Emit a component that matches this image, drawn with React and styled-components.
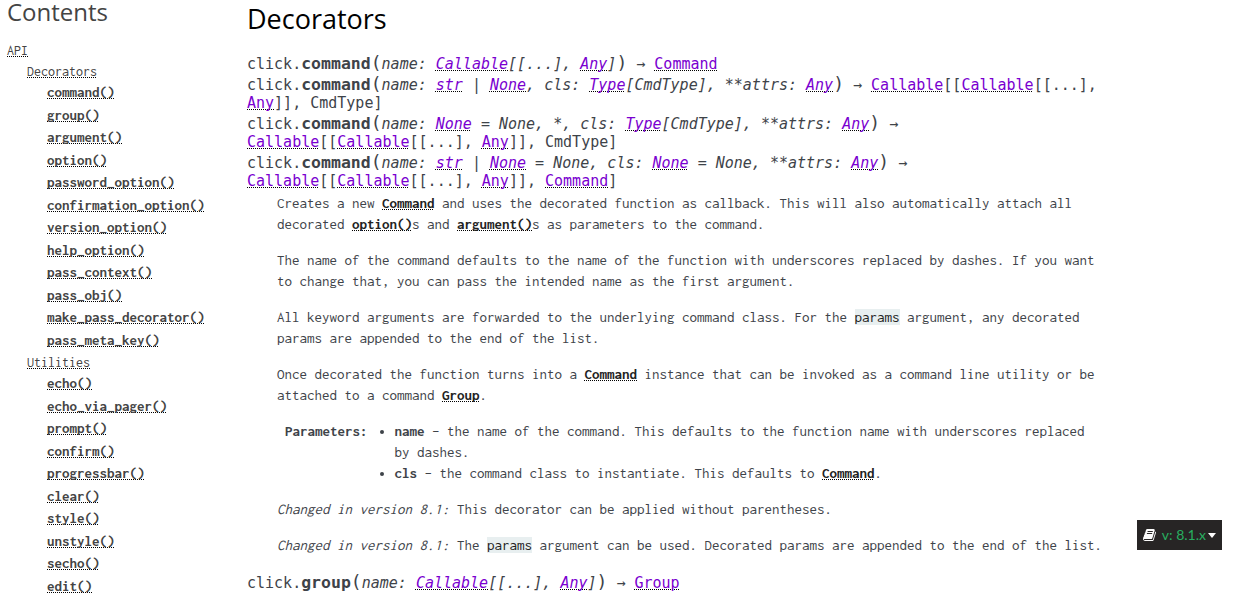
import React from "react";
import styled, { createGlobalStyle } from "styled-components";

const mono = `Inconsolata, "Noto Sans Mono CJK SC", "DejaVu Sans Mono", monospace`;
const sigMono = `"DejaVu Sans Mono", monospace`;

const Global = createGlobalStyle`
  body {
    margin: 0;
    background: #fff;
    color: #3e4349;
    font: 15px/21px ${mono};
  }
`;

const Page = styled.div`
  display: flex;
  align-items: flex-start;
  gap: 20px;
  padding: 0 132px 0 7px;
`;

const Sidebar = styled.nav`
  flex: 0 0 220px;
  font-size: 14px;
`;

const SideTitle = styled.h3`
  margin: 0 0 16px;
  color: #444;
  font: 400 24px/24px "Open Sans", sans-serif;
`;

const Toc = styled.ul`
  margin: 0;
  padding: 0 0 0 ${(p) => (p.$nested ? "20px" : "0")};
  list-style: none;
`;

const DottedLink = styled.a`
  text-decoration: underline dotted #000 1px;
  text-decoration-skip-ink: none;
  text-underline-offset: 1px;
`;

const TocLink = styled(DottedLink)`
  color: #444;
`;

const TocCode = styled.code`
  font: 700 15px/1 ${mono};
  vertical-align: 1px;
`;

const CodeItem = styled.li`
  line-height: 1.5;
  font-size: 15px;
`;

const Main = styled.main`
  flex: 1;
  min-width: 0;
`;

const Title = styled.h2`
  margin: 0 0 15px;
  color: #000;
  font: 400 27px/37px "Open Sans", sans-serif;
`;

const Definition = styled.dl`
  margin: 0 0 15px;
`;

const Signature = styled.dt`
  font: 15px ${sigMono};
`;

const SigName = styled.b`
  font-size: 110%;
`;

const Paren = styled.span`
  font-size: 18px;
`;

const TypeLink = styled(DottedLink)`
  color: #7a00d0;
`;

const Body = styled.dd`
  margin: 3px 0 0 30px;
`;

const Para = styled.p`
  margin: 0 0 15px;
`;

const RefLink = styled(DottedLink)`
  color: #222;
  font-weight: 700;
`;

const Literal = styled.code`
  background: #e8eff0;
  color: #222;
  font: 15px/15px ${mono};
`;

const Fields = styled.dl`
  display: flex;
  gap: 7px;
  margin: 0 0 15px;
  padding: 0 8px;
`;

const FieldName = styled.dt`
  font-weight: 700;
`;

const FieldBody = styled.dd`
  flex: 1;
  margin: 0;
`;

const ParamList = styled.ul`
  margin: 0;
  padding: 0 0 0 20px;
`;

const Version = styled.button`
  position: fixed;
  right: 20px;
  bottom: 43px;
  display: flex;
  align-items: center;
  height: 30px;
  padding: 0 6px;
  border: 0;
  background: #272525;
  color: #27ae60;
  font: 14px/30px Lato, sans-serif;
  cursor: pointer;
`;

const VersionText = styled.span`
  flex: 1;
  padding: 0 2px 0 6px;
`;

const decorators = [
  "command()", "group()", "argument()", "option()", "password_option()",
  "confirmation_option()", "version_option()", "help_option()",
  "pass_context()", "pass_obj()", "make_pass_decorator()", "pass_meta_key()",
];
const utilities = [
  "echo()", "echo_via_pager()", "prompt()", "confirm()", "progressbar()",
  "clear()", "style()", "unstyle()", "secho()", "edit()",
];

function TocGroup({ title, items }) {
  return (
    <li>
      <TocLink href="#">{title}</TocLink>
      <Toc $nested>
        {items.map((name) => (
          <CodeItem key={name}>
            <TocCode><TocLink href="#">{name}</TocLink></TocCode>
          </CodeItem>
        ))}
      </Toc>
    </li>
  );
}

const T = ({ children }) => <TypeLink href="#">{children}</TypeLink>;
const Ref = ({ children }) => <RefLink href="#">{children}</RefLink>;

function Sig({ name, params, returns }) {
  return (
    <Signature>
      click.<SigName>{name}</SigName><Paren>(</Paren><em>{params}</em><Paren>)</Paren> → {returns}
    </Signature>
  );
}

const nested = <><T>Callable</T>[[<T>Callable</T>[[...], <T>Any</T>]], </>;
const callableParam = <>name: <T>Callable</T>[[...], <T>Any</T>]</>;

function BookIcon() {
  return (
    <svg width="13" height="14" viewBox="0 0 1664 1792" fill="#fcfcfc" aria-hidden="true">
      <path d="M1639 478q40 57 18 129l-275 906q-19 64-76.5 107.500t-122.500 43.500h-923q-77 0-148.500-53.500t-99.500-131.500q-24-67-2-127 0-4 3-27t4-37q1-8-3-21.500t-3-19.500q2-11 8-21t16.500-23.500 16.500-23.500q23-38 45-91.500t30-91.500q3-10 .5-30t-.5-28q3-11 17-28t17-23q21-36 42-92t25-90q1-9-2.500-32t.5-28q4-13 22-30.500t22-22.500q19-26 42.500-84.500t27.500-96.500q1-8-3-25.500t-2-26.500q2-8 9-18t18-23 17-21q8-12 16.500-30.500t15-35 16-36 19.500-32 26.500-23.500 36-11.500 47.500 5.500l-1 3q38-9 51-9h761q74 0 114 56t18 130l-274 906q-36 119-71.500 153.500t-128.500 34.500h-869q-27 0-38 15-11 16-1 43 24 70 144 70h923q29 0 56-15.500t35-41.500l300-987q7-22 5-57 38 15 59 43zm-1064 2q-4 13 2 22.500t20 9.500h608q13 0 25.500-9.500t16.500-22.500l21-64q4-13-2-22.500t-20-9.500h-608q-13 0-25.500 9.500t-16.500 22.500zm-83 256q-4 13 2 22.500t20 9.500h608q13 0 25.500-9.500t16.500-22.500l21-64q4-13-2-22.500t-20-9.500h-608q-13 0-25.500 9.500t-16.500 22.500z" />
    </svg>
  );
}

export default function App() {
  return (
    <>
      <Global />
      <Page>
        <Sidebar>
          <SideTitle>Contents</SideTitle>
          <Toc>
            <li>
              <TocLink href="#">API</TocLink>
              <Toc $nested>
                <TocGroup title="Decorators" items={decorators} />
                <TocGroup title="Utilities" items={utilities} />
              </Toc>
            </li>
          </Toc>
        </Sidebar>
        <Main>
          <Title>Decorators</Title>
          <Definition>
            <Sig name="command" params={callableParam} returns={<T>Command</T>} />
            <Sig
              name="command"
              params={<>name: <T>str</T> | <T>None</T>, cls: <T>Type</T>[CmdType], **attrs: <T>Any</T></>}
              returns={<>{nested}CmdType]</>}
            />
            <Sig
              name="command"
              params={<>name: <T>None</T> = None, *, cls: <T>Type</T>[CmdType], **attrs: <T>Any</T></>}
              returns={<>{nested}CmdType]</>}
            />
            <Sig
              name="command"
              params={<>name: <T>str</T> | <T>None</T> = None, cls: <T>None</T> = None, **attrs: <T>Any</T></>}
              returns={<>{nested}<T>Command</T>]</>}
            />
            <Body>
              <Para>
                Creates a new <Ref>Command</Ref> and uses the decorated function as callback. This
                will also automatically attach all decorated <Ref>option()</Ref>s
                and <Ref>argument()</Ref>s as parameters to the command.
              </Para>
              <Para>
                The name of the command defaults to the name of the function with underscores
                replaced by dashes. If you want to change that, you can pass the intended name as
                the first argument.
              </Para>
              <Para>
                All keyword arguments are forwarded to the underlying command class. For
                the <Literal>params</Literal> argument, any decorated params are appended to the end
                of the list.
              </Para>
              <Para>
                Once decorated the function turns into a <Ref>Command</Ref> instance that can be
                invoked as a command line utility or be attached to a command <Ref>Group</Ref>.
              </Para>
              <Fields>
                <FieldName>Parameters:</FieldName>
                <FieldBody>
                  <ParamList>
                    <li>
                      <strong>name</strong> – the name of the command. This defaults to the function
                      name with underscores replaced by dashes.
                    </li>
                    <li>
                      <strong>cls</strong> – the command class to instantiate. This defaults
                      to <Ref>Command</Ref>.
                    </li>
                  </ParamList>
                </FieldBody>
              </Fields>
              <Para>
                <em>Changed in version 8.1:</em> This decorator can be applied without parentheses.
              </Para>
              <Para>
                <em>Changed in version 8.1:</em> The <Literal>params</Literal> argument can be used.
                Decorated params are appended to the end of the list.
              </Para>
            </Body>
          </Definition>
          <Definition>
            <Sig name="group" params={callableParam} returns={<T>Group</T>} />
          </Definition>
        </Main>
      </Page>
      <Version type="button">
        <BookIcon />
        <VersionText>v: 8.1.x</VersionText>
        <svg width="8" height="5" viewBox="0 0 8 5" fill="#fcfcfc" aria-hidden="true">
          <path d="M0 0h8L4 5z" />
        </svg>
      </Version>
    </>
  );
}
